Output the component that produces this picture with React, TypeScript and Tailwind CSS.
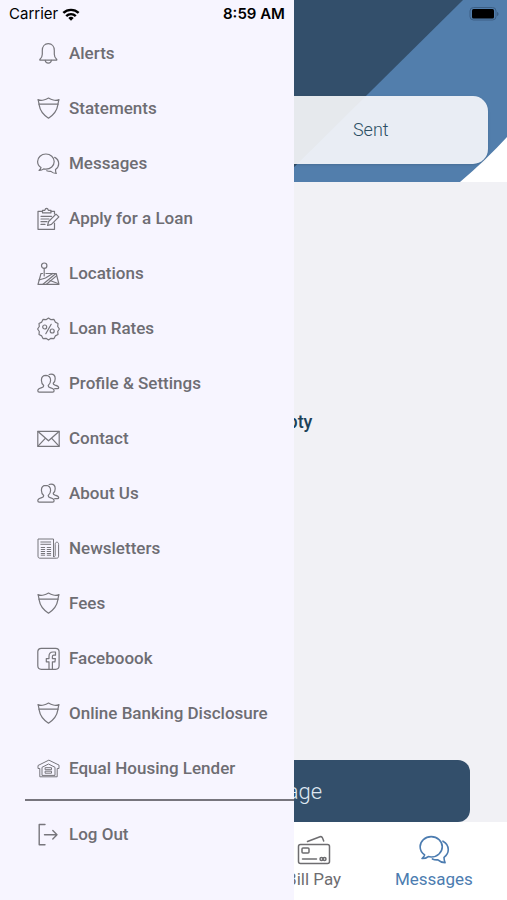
import type { ReactNode } from "react";

function Icon({ children, className = "size-6 text-[#77767c]" }: { children: ReactNode; className?: string }) {
  return (
    <svg
      viewBox="0 0 24 24"
      className={`${className} shrink-0`}
      fill="none"
      stroke="currentColor"
      strokeWidth="1.2"
      strokeLinecap="round"
      strokeLinejoin="round"
      aria-hidden="true"
    >
      {children}
    </svg>
  );
}

const bell = (
  <Icon>
    <path d="M4 17.2c1.600-1.400 2.300-2.600 2.300-5V8.400C6.300 4.700 8.600 1.700 12.300 1.700s6 3 6 6.700v3.800c0 2.400.7 3.600 2.300 5 .5.5.2 1-.4 1H4.400c-.6 0-.9-.5-.4-1z" />
    <path d="M9.200 18.300c.2 1.800 1.400 2.900 3.100 2.900s2.900-1.100 3.100-2.900" />
  </Icon>
);

const shield = (
  <Icon>
    <path d="M2 2.600c2 1 4 .9 5.700.4 1.800-.4 3.200-1 4.800-1.900 1.600.9 3 1.500 4.800 1.900 1.700.5 3.700.6 5.700-.4-.8 2.200-.8 3.600-1.200 5.600-.9 6-4.500 10-9.300 13C7.700 18.200 4.100 14.200 3.200 8.200 2.800 6.200 2.800 4.800 2 2.600z" />
    <path d="M3 7.200h19" />
  </Icon>
);

const chatShapes = (
  <>
    <path d="M5 15.600C2.800 14.200 1.600 12 1.600 9.600 1.600 5.400 5.300 2 9.900 2s8.300 3.400 8.300 7.600-3.700 7.600-8.300 7.600c-.8 0-1.500-.1-2.200-.3-1.300 1.100-2.900 1.600-4.700 1.500 1-.8 1.700-1.700 2-2.800z" />
    <path d="M18.700 5.400c2.600 1.400 4 3.700 4 6.300 0 2.300-1.200 4.400-3.200 5.800 0 1.500.2 2.700.8 4-2.200-.1-4-.8-5.400-2.100-1.500.1-2.900-.1-4.100-.7" />
  </>
);

const chat = <Icon>{chatShapes}</Icon>;

const clipboard = (
  <Icon>
    <path d="M18.500 7V4.300H15M6.500 4.300H2v18h16.500V16" />
    <path d="M6.500 5.800V3.300h2.300c.3-1.200 1-2 1.800-2s1.500.8 1.800 2H15v2.500z" />
    <path d="M5 9.300h10.500M5 12h8M5 14.700h6M5 17.400h4" />
    <path d="M11.600 18.500l1-4 7.400-7.400 2.900 2.800-7.500 7.500z" />
  </Icon>
);

const map = (
  <Icon>
    <circle cx="8.200" cy="3.700" r="2.700" />
    <path d="M8.200 6.400V14" />
    <path d="M6.500 11.500H5L2 22.300h21l-2.800-10.800H10" />
    <path d="M3 18l6.500-2 7.300-4.500M7 22.200l12.600-10.500M10.500 22.200l9.900-8.300M14 18.500l8 3" />
  </Icon>
);

const percent = (
  <Icon>
    <path d="M12.500 1l2.500 1.700 3-.3 1.300 2.700 2.700 1.400-.3 3 1.700 2.500-1.700 2.500.3 3-2.700 1.400-1.300 2.700-3-.3-2.500 1.700-2.500-1.700-3 .3-1.300-2.700L3 17.500l.3-3L1.600 12l1.700-2.500-.3-3 2.700-1.400L7 2.400l3 .3z" />
    <path d="M15.200 7.300L9.800 16.700" />
    <circle cx="8.700" cy="10" r="2" />
    <circle cx="16.200" cy="14" r="2" />
  </Icon>
);

const people = (
  <Icon>
    <path d="M10 3.400c-2.800 0-4.600 2-4.600 4.900 0 2.200.9 4.100 2.300 5.200.1 1.300-.4 1.800-1.900 2.200-2.700.7-4 1.500-4 3.100 0 .9.500 1.300 1.400 1.300h13.500c.9 0 1.400-.4 1.400-1.300 0-1.600-1.300-2.400-4-3.100-1.500-.4-2-.9-1.900-2.200 1.400-1.100 2.400-3 2.400-5.200 0-2.900-1.800-4.900-4.600-4.900z" />
    <path d="M13.200 2.500c.6-.2 1.200-.3 1.800-.3 2.600 0 4.200 1.800 4.200 4.500 0 1.900-.8 3.500-2 4.500-.1 1.100.5 1.500 1.800 1.900 2.500.6 3.700 1.200 3.700 2.600 0 .7-.5 1-1.200 1h-2.800" />
  </Icon>
);

const envelope = (
  <Icon>
    <path d="M1.800 4.300h21.400v15H1.800z" />
    <path d="M2 4.500l10.500 9.300L23 4.500M2 19.200l7.500-8M23 19.200l-7.500-8" />
  </Icon>
);

const newspaper = (
  <Icon>
    <path d="M17.500 19.700V2H2v17.200c0 1.300.7 2 2 2h16.600c1.300 0 2-.7 2-2V7.500c0-1.600-.7-2.300-1.700-2.300s-1.700.7-1.700 2.300v10.700c0 1-.4 1.500-1.100 1.500s-.6-.5-.6-1.500V5" strokeWidth="1" />
    <path d="M4.800 5h9.900M4.800 7.300h9.900M5.200 10.500h3.500M5.200 12.500h3.500M5.200 14.500h3.500M5.200 16.500h3.500M5.200 18.200h3.500M11.200 10.500h3.500M11.200 12.500h3.500M11.200 14.500h3.500M11.200 16.500h3.500M11.200 18.200h3.500" strokeWidth="1" />
  </Icon>
);

const facebook = (
  <Icon>
    <rect x="1.800" y="1.300" width="21.300" height="21" rx="3.500" />
    <path d="M13 22.200v-7.400h-2.700v-3.200H13V9.300c0-2.600 1.500-4.300 4-4.300h2.500v3.200h-1.700c-1 0-1.400.4-1.400 1.300v2.100h3l-.5 3.200h-2.500v7.400" />
  </Icon>
);

const house = (
  <Icon>
    <path d="M12.500 3.300L2 8.500v3h1.800v8.300h17.400v-8.300H23v-3z" strokeWidth="1" />
    <path d="M6 18v-7.700l6.500-3.300 6.500 3.300V18z" strokeWidth="1" />
    <path d="M9.500 10.700h6v2h-6zM9.500 14.200h6v2h-6z" strokeWidth="1" />
  </Icon>
);

const logout = (
  <Icon>
    <path d="M9 1.500H3.200v20.300H9M8.500 11.700H21M16.800 7.500l4.200 4.200-4.200 4.200" strokeWidth="1.400" />
  </Icon>
);

const menu = [
  { label: "Alerts", icon: bell },
  { label: "Statements", icon: shield },
  { label: "Messages", icon: chat },
  { label: "Apply for a Loan", icon: clipboard },
  { label: "Locations", icon: map },
  { label: "Loan Rates", icon: percent },
  { label: "Profile & Settings", icon: people },
  { label: "Contact", icon: envelope },
  { label: "About Us", icon: people },
  { label: "Newsletters", icon: newspaper },
  { label: "Fees", icon: shield },
  { label: "Faceboook", icon: facebook },
  { label: "Online Banking Disclosure", icon: shield },
  { label: "Equal Housing Lender", icon: house },
];

function MenuLink({ label, icon }: { label: string; icon: ReactNode }) {
  return (
    <a href="#" className="flex h-[55px] items-center gap-[9px] pl-9 text-[17px] font-medium whitespace-nowrap text-[#6e6d73]">
      {icon}
      {label}
    </a>
  );
}

function StatusBar() {
  return (
    <div className="absolute inset-x-0 top-0 z-20 grid h-7 grid-cols-3 items-center pr-2 pl-[9px] font-['Inter',sans-serif] text-[15px] text-black">
      <div className="flex items-center gap-1">
        <span>Carrier</span>
        <svg viewBox="0 0 20 14" className="h-[13px] w-[18px]" fill="none" stroke="black" strokeWidth="2.700" aria-hidden="true">
          <path d="M1.500 5.300a12.200 12.200 0 0 1 17 0" />
          <path d="M4.700 8.700a7.600 7.600 0 0 1 10.600 0" />
          <path d="M10 14l-3-3a4.300 4.300 0 0 1 6 0z" fill="black" stroke="none" />
        </svg>
      </div>
      <span className="text-center font-semibold">8:59 AM</span>
      <svg viewBox="0 0 30 14" className="h-[14px] w-[30px] justify-self-end" aria-hidden="true">
        <rect x="1" y="0.500" width="26" height="12.500" rx="3.500" fill="none" stroke="#3c5f85" />
        <rect x="3" y="2" width="22" height="9.500" rx="1.500" fill="black" />
        <path d="M28 5c2 .5 2 3.500 0 4z" fill="#3c5f85" />
      </svg>
    </div>
  );
}

function Drawer() {
  return (
    <aside className="absolute inset-y-0 left-0 z-10 w-[58%] bg-[#f7f5ff] pt-[26px]">
      <nav aria-label="Menu">
        {menu.map((item) => (
          <MenuLink key={item.label} {...item} />
        ))}
        <hr className="mt-[3px] mb-1.5 ml-[25px] h-[2px] border-0 bg-[#77757d]" />
        <MenuLink label="Log Out" icon={logout} />
      </nav>
    </aside>
  );
}

function Header() {
  return (
    <header className="relative bg-[#527eac] px-[19px] pt-24 pb-[18px]">
      <svg viewBox="0 0 507 182" preserveAspectRatio="none" className="absolute inset-0 size-full" aria-hidden="true">
        <path d="M0 0h463L279 182H0z" fill="#334f6b" />
        <path d="M507 137q-21 23-47 45h47z" fill="white" />
      </svg>
      <div className="relative grid h-[68px] grid-cols-2 rounded-[15px] bg-[#fafafc]/90 text-lg font-light text-[#2b4f63] shadow-sm">
        <button type="button">Inbox</button>
        <button type="button">Sent</button>
      </div>
    </header>
  );
}

const card = (
  <svg viewBox="0 0 34 32" className="h-8 w-[34px]" fill="none" stroke="currentColor" strokeWidth="1.500" strokeLinecap="round" strokeLinejoin="round" aria-hidden="true">
    <rect x="1.500" y="10.500" width="31" height="19" rx="2" />
    <rect x="5" y="14" width="7" height="5" rx="1" />
    <path d="M5.500 25h14M10.500 7.500l12.500-4.700c1.200-.4 1.900-.2 2.400.9l1.300 3.300" />
    <circle cx="24.500" cy="25" r="1.500" />
    <circle cx="27.500" cy="25" r="1.500" />
  </svg>
);

const home = (
  <Icon className="size-8">
    <path d="M3 11l9-8 9 8M5.500 9v12h13V9" />
  </Icon>
);

const transfer = (
  <Icon className="size-8">
    <path d="M3 8h17l-4-4M21 16H4l4 4" />
  </Icon>
);

const tabs = [
  { label: "Accounts", icon: home, active: false },
  { label: "Transfers", icon: transfer, active: false },
  { label: "Bill Pay", icon: card, active: false },
  { label: "Messages", icon: <Icon className="size-8">{chatShapes}</Icon>, active: true },
];

function TabBar() {
  return (
    <nav aria-label="Tabs" className="grid grid-cols-4 bg-white px-[13px] pt-3 pb-2">
      {tabs.map((tab) => (
        <a
          key={tab.label}
          href="#"
          className={`flex flex-col items-center text-[17px] leading-[26px] ${tab.active ? "text-[#4c7cb0]" : "text-[#6e6d70]"}`}
        >
          {tab.icon}
          <span className="whitespace-nowrap">{tab.label}</span>
        </a>
      ))}
    </nav>
  );
}

export default function App() {
  return (
    <div className="relative flex min-h-screen flex-col overflow-hidden bg-[#f1f1f5] font-['Roboto',sans-serif]">
      <StatusBar />
      <Drawer />
      <Header />
      <main className="flex flex-1 flex-col px-[37px]">
        <p className="flex flex-1 items-center justify-center pb-[98px] text-lg font-medium text-[#1c4258]">
          Inbox is Empty
        </p>
        <button type="button" className="h-[62px] rounded-xl bg-[#334f6b] text-[22px] font-light text-[#dfe8f1]">
          New Message
        </button>
      </main>
      <TabBar />
    </div>
  );
}
